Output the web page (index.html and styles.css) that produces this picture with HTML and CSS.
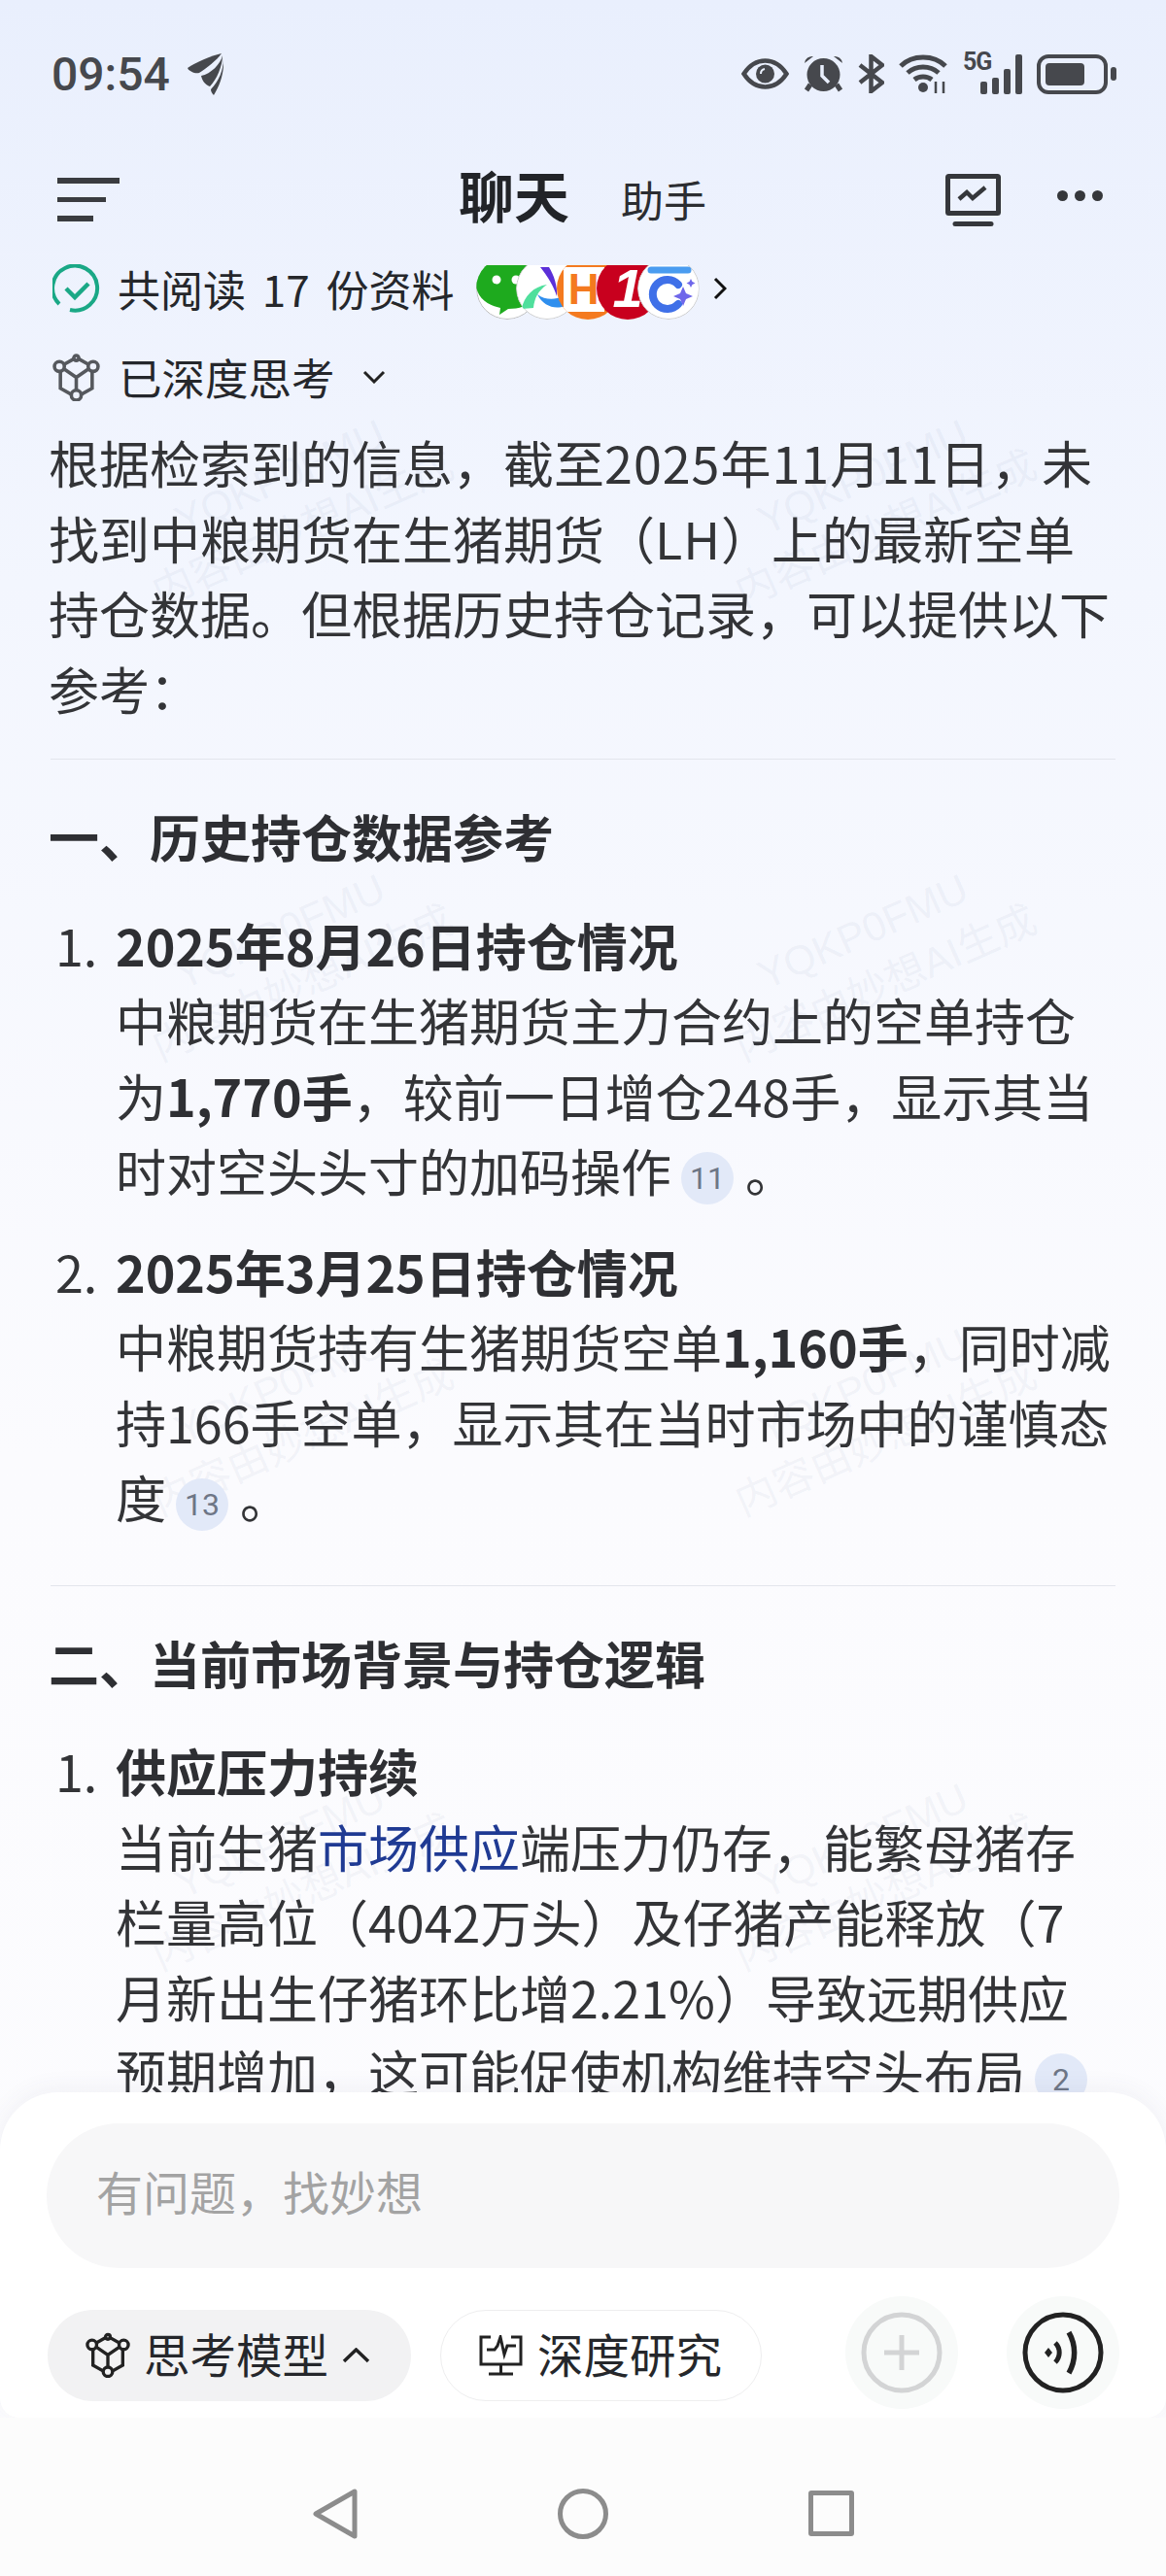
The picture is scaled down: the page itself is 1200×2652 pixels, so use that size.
FILE: index.html
```html
<!DOCTYPE html>
<html lang="zh-CN">
<head>
  <meta charset="utf-8">
  <title>聊天</title>
  <meta name="viewport" content="width=device-width, initial-scale=1.0">
  <link rel="stylesheet" href="styles.css">
</head>
<body>
<div class="page">
  <div class="watermarks">
    <div class="mark"><div>YQKP0FMU</div><div>内容由妙想AI生成</div></div>
    <div class="mark"><div>YQKP0FMU</div><div>内容由妙想AI生成</div></div>
    <div class="mark"><div>YQKP0FMU</div><div>内容由妙想AI生成</div></div>
    <div class="mark"><div>YQKP0FMU</div><div>内容由妙想AI生成</div></div>
    <div class="mark"><div>YQKP0FMU</div><div>内容由妙想AI生成</div></div>
    <div class="mark"><div>YQKP0FMU</div><div>内容由妙想AI生成</div></div>
    <div class="mark"><div>YQKP0FMU</div><div>内容由妙想AI生成</div></div>
    <div class="mark"><div>YQKP0FMU</div><div>内容由妙想AI生成</div></div>
  </div>

  <header class="status">
    <div class="status-left">
      <span class="time">09:54</span>
      <svg width="37" height="44" viewBox="0 0 37 44" fill="#46484d">
        <path d="M35 1C26 3 8 10 0 16c2 4 8 6 12 5C20 16 30 8 35 1z"/>
        <path d="M36 3C34 12 24 22 14 24c1 5 4 9 9 11C30 28 36 14 36 3z"/>
        <path d="M37 7c1 12-3 26-10 37-2-2-3-4-3-6C32 30 37 18 37 7z"/>
      </svg>
    </div>
    <div class="status-right">
      <svg width="49" height="32" viewBox="0 0 49 32" fill="none" stroke="#46484d" stroke-width="4.5">
        <path d="M2.5 16C9 6 16 2.500 24.500 2.500S40 6 46.500 16C40 26 33 29.500 24.500 29.500S9 26 2.500 16z"/>
        <circle cx="24.500" cy="16" r="9.500" fill="#46484d" stroke="none"/>
        <path d="M20 16a5 5 0 0 1 4-5" stroke="#e9effd" stroke-width="2"/>
      </svg>
      <svg width="41" height="40" viewBox="0 0 41 40" fill="#46484d">
        <circle cx="20.500" cy="21" r="17"/>
        <path d="M1 9a8 8 0 0 1 9-7zM40 9a8 8 0 0 0-9-7z"/>
        <path d="M7 31l-4 6M34 31l4 6" stroke="#46484d" stroke-width="5"/>
        <path d="M19 11v11l7 7" fill="none" stroke="#e9effd" stroke-width="3.500"/>
      </svg>
      <svg width="27" height="40" viewBox="0 0 27 40" fill="none" stroke="#46484d" stroke-width="4.500">
        <path d="M2 11l23 18-11.500 9V2L25 11 2 29"/>
      </svg>
      <svg width="51" height="40" viewBox="0 0 51 40" fill="none" stroke="#46484d" stroke-width="5">
        <path d="M2 12C14 0 36 0 48 12"/>
        <path d="M9 19c9-8 23-8 32 0"/>
        <path d="M16 26c5-4 13-4 18 0"/>
        <circle cx="25" cy="34" r="5" fill="#46484d" stroke="none"/>
        <path d="M38 28v12M46 28v12" stroke-width="2.500"/>
      </svg>
      <div class="signal">
        <span class="five-g">5G</span>
        <div class="bars">
          <i class="bar bar-1"></i><i class="bar bar-2"></i><i class="bar bar-3"></i><i class="bar bar-4"></i>
        </div>
      </div>
      <div class="battery">
        <div class="battery-body"><div class="battery-level"></div></div>
        <div class="battery-nub"></div>
      </div>
    </div>
  </header>

  <nav class="topbar">
    <div class="menu"><i class="menu-1"></i><i class="menu-2"></i><i class="menu-3"></i></div>
    <div class="titles">
      <span class="title">聊天</span>
      <span class="subtitle">助手</span>
    </div>
    <svg class="monitor" width="57" height="54" viewBox="0 0 57 54" fill="none" stroke="#35373b">
      <rect x="2.500" y="2.500" width="52" height="38" rx="1" stroke-width="5"/>
      <path d="M14 26l8-7 6 6 13-11" stroke-width="4.500"/>
      <path d="M10 51.500h37" stroke-width="5" stroke-linecap="round"/>
    </svg>
    <div class="dots"><i></i><i></i><i></i></div>
  </nav>

  <main class="chat">
    <div class="sources">
      <svg width="50" height="50" viewBox="0 0 50 50" fill="none" stroke="#1aa886" stroke-width="4">
        <path d="M7 41A23 23 0 1 1 18 47"/>
        <path d="M14 25l9 9 14-14" stroke-width="4.500"/>
      </svg>
      <span class="row-text">共阅读 17 份资料</span>
      <div class="avatars">
        <div class="avatar">
          <svg width="64" height="64" viewBox="0 0 64 64">
            <circle cx="32" cy="32" r="31.500" fill="#fff" stroke="#bbb"/>
            <path d="M32 0a31 29 0 0 1 28 42c-6 8-16 11-27 11l-9 6 1-7C10 49 0 40 0 27 0 11 14 0 32 0z" fill="#1eaa1e"/>
            <circle cx="21" cy="23" r="4.500" fill="#fff"/><circle cx="41" cy="23" r="4.500" fill="#fff"/>
          </svg>
        </div>
        <div class="avatar">
          <svg width="64" height="64" viewBox="0 0 64 64">
            <circle cx="32" cy="32" r="31.500" fill="#fff" stroke="#ccc"/>
            <path d="M25 10h9c5 8 9 20 8 30-3-10-9-20-17-30z" fill="#5b2fd8"/>
            <path d="M6 53c2-13 12-23 26-25-9 6-13 14-14 24z" fill="#4fdf9c"/>
            <path d="M22 38c8 6 18 6 26 2l2 10c-10 4-22 0-28-12z" fill="#2f8fee"/>
          </svg>
        </div>
        <div class="avatar avatar-orange"><span class="avatar-box">H</span></div>
        <div class="avatar avatar-red"><span>1</span></div>
        <div class="avatar">
          <svg width="64" height="64" viewBox="0 0 64 64" fill="none">
            <circle cx="32" cy="32" r="31.500" fill="#fff" stroke="#ccc"/>
            <path d="M14 13h38" stroke="#4a9cf0" stroke-width="7" stroke-linecap="round"/>
            <path d="M42 28a15 15 0 1 0 0 20" stroke="#3f70e8" stroke-width="8" stroke-linecap="round"/>
            <path d="M47 30l3 7 7 3-7 3-3 7-3-7-7-3 7-3zM55 22l1.500 3 3 1.500-3 1.500-1.500 3-1.500-3-3-1.500 3-1.500z" fill="#6f67ea"/>
          </svg>
        </div>
      </div>
      <svg class="more" width="14" height="24" viewBox="0 0 14 24" fill="none" stroke="#111" stroke-width="3">
        <path d="M2 2l10 10L2 22"/>
      </svg>
    </div>

    <div class="thinking">
      <svg width="49" height="49" viewBox="0 0 48 48" fill="none" stroke="#55585d" stroke-width="3.500">
        <path d="M24 4L8 13v22l16 9 16-9V13z"/>
        <path d="M8 13l16 11 16-11M24 24v20"/>
        <g fill="#eef2fd"><circle cx="24" cy="4.500" r="2.500"/><circle cx="7" cy="13" r="5"/><circle cx="41" cy="13" r="5"/><circle cx="24" cy="42" r="5"/></g>
      </svg>
      <span class="row-text">已深度思考</span>
      <svg class="fold" width="24" height="14" viewBox="0 0 24 14" fill="none" stroke="#222" stroke-width="3">
        <path d="M2 2l10 10L22 2"/>
      </svg>
    </div>

    <p class="para">根据检索到的信息，截至<span class="tracked">2025年11月11日</span>，未<br>找到中粮期货在生猪期货（<span class="tracked">LH</span>）上的最新空单<br>持仓数据。但根据历史持仓记录，可以提供以下<br>参考：</p>

    <hr class="rule">

    <h2 class="heading">一、历史持仓数据参考</h2>
    <div class="item">
      <span class="num">1.</span>
      <div>
        <b>2025年8月26日持仓情况</b><br>
        中粮期货在生猪期货主力合约上的空单持仓<br>
        为<b>1,770手</b>，较前一日增仓248手，显示其当<br>
        时对空头头寸的加码操作<span class="cite">11</span>。
      </div>
    </div>
    <div class="item item-next">
      <span class="num">2.</span>
      <div>
        <b>2025年3月25日持仓情况</b><br>
        中粮期货持有生猪期货空单<b>1,160手</b>，同时减<br>
        持166手空单，显示其在当时市场中的谨慎态<br>
        度<span class="cite">13</span>。
      </div>
    </div>

    <hr class="rule rule-2">

    <h2 class="heading">二、当前市场背景与持仓逻辑</h2>
    <div class="item">
      <span class="num">1.</span>
      <div>
        <b>供应压力持续</b><br>
        当前生猪<span class="link">市场供应</span>端压力仍存，能繁母猪存<br>
        栏量高位（4042万头）及仔猪产能释放（7<br>
        月新出生仔猪环比增2.21%）导致远期供应<br>
        预期增加，这可能促使机构维持空头布局<span class="cite">2</span>
      </div>
    </div>
  </main>

  <section class="sheet">
    <div class="input">有问题，找妙想</div>
    <div class="tools">
      <div class="pill pill-model">
        <svg width="46" height="47" viewBox="0 0 48 48" fill="none" stroke="#222" stroke-width="3.500">
          <path d="M24 4L8 13v22l16 9 16-9V13z"/>
          <path d="M8 13l16 11 16-11M24 24v20"/>
          <g fill="#f2f2f3"><circle cx="24" cy="4.500" r="2.500"/><circle cx="7" cy="13" r="5"/><circle cx="41" cy="13" r="5"/><circle cx="24" cy="42" r="5"/></g>
        </svg>
        <span class="pill-text">思考模型</span>
        <svg width="29" height="16" viewBox="0 0 29 16" fill="none" stroke="#222" stroke-width="3.500">
          <path d="M2 14L14.500 2 27 14"/>
        </svg>
      </div>
      <div class="pill pill-research">
        <svg width="45" height="42" viewBox="0 0 45 42" fill="none" stroke="#222" stroke-width="3">
          <path d="M12 2H2v28h41V2H33"/>
          <path d="M8 15h8l3-4 3-9 4 18 3-9h9"/>
          <path d="M22.500 30v10M10 40h25"/>
        </svg>
        <span class="pill-text">深度研究</span>
      </div>
      <div class="round round-plus">
        <svg width="86" height="86" viewBox="0 0 86 86" fill="none" stroke="#d3d4d5" stroke-width="5">
          <circle cx="43" cy="43" r="39"/>
          <path d="M25 43h36M43 25v36"/>
        </svg>
      </div>
      <div class="round">
        <svg width="86" height="86" viewBox="0 0 86 86" fill="none" stroke="#222" stroke-width="5">
          <circle cx="43" cy="43" r="39"/>
          <path d="M35 33a14 14 0 0 1 0 20" stroke-width="5"/>
          <path d="M49 22a42 42 0 0 1 0 42" stroke-width="5.500"/>
          <path d="M24 43l4-5 4 5-4 5z" fill="#222" stroke="none"/>
        </svg>
      </div>
    </div>
  </section>

  <footer class="nav">
    <svg width="46" height="52" viewBox="0 0 46 52" fill="none" stroke="#8c8c8c" stroke-width="5" stroke-linejoin="round">
      <path d="M43 3v46L3 26z"/>
    </svg>
    <div class="nav-home"></div>
    <div class="nav-square"></div>
  </footer>
</div>
</body>
</html>
```

FILE: styles.css
```css
html {
  box-sizing: border-box;
}

*, *:before, *:after {
  box-sizing: inherit;
}

body {
  margin: 0;
  font-family: "Noto Sans CJK SC", "Noto Sans", sans-serif;
  color: #333437;
}

.page {
  position: relative;
  display: flex;
  flex-direction: column;
  width: 1200px;
  height: 2652px;
  overflow: hidden;
  background: linear-gradient(#e9effd 0, #f3f6fe 600px, #fbfbfe 1500px, #fcfcfe 100%);
}

.watermarks {
  position: absolute;
  top: 284px;
  left: 0;
  display: grid;
  grid-template-columns: 600px 600px;
  grid-auto-rows: 468px;
}

.mark {
  display: flex;
  flex-direction: column;
  align-items: center;
  justify-content: center;
  font-family: "Liberation Sans", "Noto Sans CJK SC", sans-serif;
  font-size: 42px;
  line-height: 58px;
  color: rgba(110, 125, 165, .08);
  transform: rotate(-24deg);
}

/* status bar */
.status {
  position: relative;
  display: flex;
  justify-content: space-between;
  align-items: center;
  flex: none;
  height: 152px;
  padding: 0 51px 0 53px;
}

.status-left {
  display: flex;
  align-items: center;
  gap: 18px;
}

.time {
  font-family: Roboto, sans-serif;
  font-size: 48px;
  font-weight: 500;
  color: #46484d;
}

.status-right {
  display: flex;
  align-items: center;
  gap: 15px;
}

.signal {
  position: relative;
  display: flex;
  justify-content: flex-end;
  width: 61px;
  height: 41px;
}

.five-g {
  position: absolute;
  top: -7px;
  left: 0;
  font-family: Roboto, sans-serif;
  font-size: 25px;
  font-weight: 700;
  letter-spacing: -1px;
  color: #46484d;
}

.bars {
  display: flex;
  align-items: flex-end;
  gap: 5px;
}

.bar {
  width: 7px;
  background: #46484d;
  border-radius: 2px;
}

.bar-1 { height: 13px; }
.bar-2 { height: 17px; }
.bar-3 { height: 26px; }
.bar-4 { height: 41px; }

.battery {
  display: flex;
  align-items: center;
  gap: 3px;
}

.battery-body {
  width: 73px;
  height: 41px;
  padding: 5px;
  border: 4px solid #46484d;
  border-radius: 12px;
}

.battery-level {
  width: 40px;
  height: 100%;
  background: #46484d;
  border-radius: 4px;
}

.battery-nub {
  width: 6px;
  height: 14px;
  background: #46484d;
  border-radius: 3px;
}

/* top bar */
.topbar {
  position: relative;
  display: flex;
  align-items: center;
  flex: none;
  height: 113px;
  padding: 0 65px 6px 59px;
}

.menu {
  display: flex;
  flex-direction: column;
  gap: 14px;
}

.menu i {
  display: block;
  height: 5.500px;
  background: #3a3c40;
}

.menu-1 { width: 64px; }
.menu-2 { width: 50px; }
.menu-3 { width: 37px; }

.titles {
  display: flex;
  align-items: center;
  gap: 53px;
  margin: -7px 0 0 349px;
}

.title {
  margin-bottom: 6px;
  font-size: 57px;
  font-weight: 700;
  color: #222428;
}

.subtitle {
  font-size: 44px;
  color: #2b2d31;
  margin-top: 6px;
}

.monitor {
  margin-left: auto;
}

.dots {
  display: flex;
  gap: 7px;
  margin-left: 58px;
  margin-top: -8px;
}

.dots i {
  display: block;
  width: 11px;
  height: 11px;
  border-radius: 50%;
  background: #35373b;
}

/* chat content */
.chat {
  position: relative;
  flex: 1;
  min-height: 0;
  overflow: hidden;
  padding: 0 50px;
  font-size: 52px;
  line-height: 77.500px;
  white-space: nowrap;
}

.sources {
  display: flex;
  align-items: center;
  height: 64px;
  margin-left: 4px;
}

.row-text {
  font-size: 44px;
  line-height: 60px;
  color: #25272b;
}

.sources .row-text {
  margin-left: 17px;
  word-spacing: 7px;
}

.avatars {
  display: flex;
  flex: none;
  height: 64px;
  margin-left: 22px;
  padding-right: 22.500px;
  clip-path: inset(8px 0 0 0);
}

.avatar {
  flex: none;
  width: 64px;
  height: 64px;
  margin-right: -22.500px;
  border-radius: 50%;
  overflow: hidden;
}

.avatar svg {
  display: block;
}

.avatar-orange {
  display: flex;
  justify-content: flex-start;
  padding: 10px 0 0 7px;
  background: #f47a1f;
}

.avatar-box {
  width: 42px;
  height: 46px;
  background: #fff;
  font-family: "Liberation Sans", sans-serif;
  font-size: 44px;
  font-weight: 700;
  line-height: 46px;
  text-align: center;
  color: #f47a1f;
}

.avatar-red {
  display: flex;
  align-items: center;
  justify-content: center;
  background: #c8001e;
  font-family: "Liberation Sans", sans-serif;
  font-size: 56px;
  font-style: italic;
  font-weight: 700;
  line-height: 64px;
  color: #fff;
}

.more {
  margin-left: 14px;
}

.thinking {
  display: flex;
  align-items: center;
  height: 60px;
  margin: 29px 0 19px 4px;
}

.thinking .row-text {
  margin-left: 19px;
  font-size: 44.500px;
}

.fold {
  margin-left: 28px;
}

.para {
  margin: 0;
}

.tracked {
  letter-spacing: 1px;
}

.rule {
  height: 1px;
  margin: 34px 2px 0;
  border: 0;
  background: #e3e5ec;
}

.heading {
  margin: 40px 0 0;
  font-size: 52px;
  line-height: 77.500px;
  font-weight: 700;
  color: #2e2f33;
}

.item {
  display: flex;
  margin-top: 34px;
}

.item b {
  color: #2e2f33;
}

.item-next {
  margin-top: 26px;
}

.num {
  flex: none;
  width: 69px;
  padding-left: 7px;
}

.rule-2 {
  margin-top: 52px;
}

.link {
  color: #1f3a93;
}

.cite {
  display: inline-block;
  width: 54px;
  height: 54px;
  margin: 0 12px 0 10px;
  border-radius: 50%;
  background: #e2e9f8;
  font-family: Roboto, sans-serif;
  font-size: 32px;
  line-height: 54px;
  text-align: center;
  color: #6e7686;
  vertical-align: 3px;
}

/* input sheet */
.sheet {
  position: relative;
  flex: none;
  height: 335px;
  margin-top: -60px;
  padding: 32px 48px 0 48px;
  background: #fff;
  border-radius: 60px 60px 20px 20px;
  box-shadow: 0 -4px 24px rgba(60, 70, 100, .06);
}

.input {
  height: 149px;
  padding-left: 51px;
  border-radius: 75px;
  background: #f7f7f8;
  font-size: 48px;
  line-height: 138px;
  color: #a3a3a3;
}

.tools {
  display: flex;
  align-items: center;
  height: 116px;
  margin-top: 29px;
}

.pill {
  display: flex;
  align-items: center;
  height: 94px;
  margin-top: 5px;
  border-radius: 47px;
  font-size: 47.500px;
  color: #25272b;
}

.pill-text {
  margin-bottom: 4px;
}

.pill-model {
  width: 374px;
  padding-left: 39px;
  margin-left: 1px;
  gap: 14px;
  background: #f2f2f3;
}

.pill-research {
  width: 331px;
  margin-left: 30px;
  padding-left: 39px;
  gap: 15px;
  border: 1px solid #eeeeef;
}

.round {
  display: flex;
  align-items: center;
  justify-content: center;
  flex: none;
  width: 116px;
  height: 116px;
  margin-left: 50px;
  border-radius: 50%;
  background: #f8faf9;
}

.round-plus {
  margin-left: auto;
}

/* android nav */
.nav {
  position: relative;
  display: flex;
  align-items: center;
  flex: none;
  height: 163px;
  padding: 34px 0 0 322px;
  background: #fcfcfc;
}

.nav-home {
  width: 52px;
  height: 52px;
  margin-left: 206px;
  border: 5px solid #8c8c8c;
  border-radius: 50%;
}

.nav-square {
  width: 47px;
  height: 47px;
  margin-left: 206px;
  border: 5px solid #8c8c8c;
  border-radius: 3px;
}
```
